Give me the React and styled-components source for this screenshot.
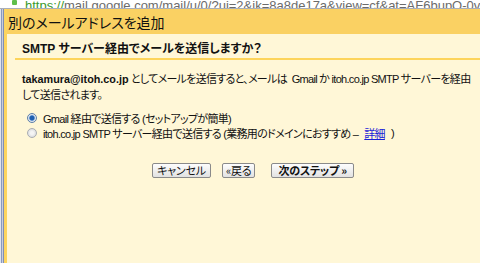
import React from "react";
import styled, { createGlobalStyle } from "styled-components";

const Global = createGlobalStyle`
  html, body { margin: 0; padding: 0; background: #fff; overflow: hidden; }
  body { font-family: "Liberation Sans", "Noto Sans CJK JP", sans-serif; }
`;

const Page = styled.div`
  width: 480px;
  height: 263px;
  display: flex;
  flex-direction: column;
  overflow: hidden;
`;

const AddressBar = styled.div`
  height: 8px;
  overflow: hidden;
  display: flex;
  align-items: flex-end;
  gap: 8px;
  padding-left: 12px;
  background: #fff;
  border-bottom: 1px solid #a9aeb8;
`;

const Lock = styled.span`
  width: 5px;
  height: 5px;
  margin-bottom: 3px;
  background: #5fbf4a;
  border-radius: 1px;
  flex: none;
`;

const Url = styled.div`
  font-size: 13px;
  line-height: 14px;
  margin-bottom: -5px;
  white-space: nowrap;
  color: #6b6b6b;
  & b { color: #3a9a2a; font-weight: normal; }
`;

const Window = styled.div`
  flex: 1;
  display: flex;
`;

const Frame = styled.div`
  width: 4px;
  flex: none;
  background: linear-gradient(
    to right,
    #dfe3ee 0 1px,
    #8b99bd 1px 2px,
    #c9cedc 2px 3px,
    #7f8fb7 3px 4px
  );
`;

const Dialog = styled.div`
  flex: 1;
  display: flex;
  flex-direction: column;
  border-left: 3px solid #fdd55f;
  background: #fff7d7;
`;

const Header = styled.div`
  height: 25px;
  background: #fad163;
  display: flex;
  align-items: center;
  padding-left: 1px;
  font-family: "Noto Sans CJK JP", sans-serif;
  font-feature-settings: "palt";
  font-size: 14px;
  color: #111;
`;

const Body = styled.div`
  padding: 8px 0 0 8px;
  font-size: 11px;
  letter-spacing: -0.7px;
  color: #111;
`;

const Question = styled.div`
  padding-left: 7px;
  font-weight: bold;
  font-size: 12px;
  letter-spacing: 0;
  line-height: 14px;
  font-feature-settings: "palt";
  height: 16px;
`;

const Rule = styled.div`
  height: 2px;
  background: #fdd45a;
  margin: 0 0 11px 0;
`;

const Para = styled.p`
  margin: 0 0 0 7px;
  line-height: 16px;
  white-space: nowrap;
  font-feature-settings: "palt";
  & b { font-weight: bold; font-size: 10.8px; letter-spacing: 0; }
`;

const Options = styled.div`
  margin: 8px 0 0 12px;
  display: flex;
  flex-direction: column;
  gap: 1px;
`;

const Option = styled.label`
  display: flex;
  align-items: center;
  gap: 6px;
  height: 14px;
  font-feature-settings: "palt";
  white-space: nowrap;
`;

const Radio = styled.span`
  width: 10px;
  height: 10px;
  border-radius: 50%;
  flex: none;
  box-sizing: border-box;
  border: 1px solid ${(p) => (p.$on ? "#5d7fa8" : "#a9adb3")};
  background: ${(p) =>
    p.$on
      ? "radial-gradient(circle, #1f5fb0 0 2px, #6c9bd3 2.6px, #dfe5ee 3.2px)"
      : "radial-gradient(circle, #f4f4f4 0 1.5px, #d4d6d9 5px)"};
`;

const Link = styled.a`
  color: #1a20d8;
  text-decoration: underline;
`;

const Buttons = styled.div`
  display: flex;
  justify-content: center;
  gap: 11px;
  margin: 23px 0 0 0;
  padding-left: 11px;
`;

const Button = styled.button`
  height: 15px;
  padding: 0 ${(p) => (p.$primary ? "6px" : "4px")};
  margin-left: ${(p) => (p.$primary ? "5px" : "0")};
  border: 1px solid #8a8a8a;
  border-radius: 2px;
  background: linear-gradient(#fdfdfd, #e2e2e2);
  font-family: "Noto Sans CJK JP", sans-serif;
  font-feature-settings: "palt";
  font-size: 11px;
  letter-spacing: -0.2px;
  line-height: 13px;
  color: #111;
  font-weight: ${(p) => (p.$primary ? "bold" : "normal")};
  display: flex;
  align-items: center;
`;

const Back = styled(Button)`
  padding: 0 3px;
`;

export default function App() {
  return (
    <Page>
      <Global />
      <AddressBar>
        <Lock />
        <Url>
          <b>https://</b>mail.google.com/mail/u/0/?ui=2&amp;ik=8a8de17a&amp;view=cf&amp;at=AF6bupO-0vQFT9xCRk0Z2
        </Url>
      </AddressBar>
      <Window>
        <Frame />
        <Dialog>
          <Header>別のメールアドレスを追加</Header>
          <Body>
            <Question>SMTP サーバー経由でメールを送信しますか？</Question>
            <Rule />
            <Para>
              <b>takamura@itoh.co.jp</b> としてメールを送信すると、メールは&nbsp; Gmail か itoh.co.jp SMTP サーバーを経由
              <br />
              して送信されます。
            </Para>
            <Options>
              <Option>
                <Radio $on />
                Gmail 経由で送信する (セットアップが簡単)
              </Option>
              <Option>
                <Radio />
                itoh.co.jp SMTP サーバー経由で送信する (業務用のドメインにおすすめ – <Link href="#">詳細</Link>)
              </Option>
            </Options>
            <Buttons>
              <Button>キャンセル</Button>
              <Back>«戻る</Back>
              <Button $primary>次のステップ »</Button>
            </Buttons>
          </Body>
        </Dialog>
      </Window>
    </Page>
  );
}
